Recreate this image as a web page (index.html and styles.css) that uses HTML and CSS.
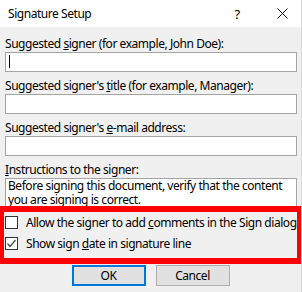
FILE: index.html
```html
<!DOCTYPE html>
<html>
<head>
  <meta charset="utf-8">
  <title>Signature Setup</title>
  <link rel="stylesheet" href="styles.css">
</head>
<body>
  <div class="dialog">
    <div class="titlebar">
      <span class="title">Signature Setup</span>
      <span class="help">?</span>
      <span class="close">
        <svg width="11" height="11" viewBox="0 0 11 11">
          <path d="M0.5 0.5 L10.5 10.5 M10.5 0.5 L0.5 10.5" stroke="#000" stroke-width="1" fill="none"/>
        </svg>
      </span>
    </div>

    <div class="content">
      <div class="field">
        <label>Suggested <u>s</u>igner (for example, John Doe):</label>
        <div class="textbox"><span class="caret"></span></div>
      </div>
      <div class="field">
        <label>Suggested signer's <u>t</u>itle (for example, Manager):</label>
        <div class="textbox"></div>
      </div>
      <div class="field">
        <label>Suggested signer's <u>e</u>-mail address:</label>
        <div class="textbox"></div>
      </div>
      <div class="field last">
        <label><u>I</u>nstructions to the signer:</label>
        <div class="textarea">Before signing this document, verify that the content you are signing is correct.</div>
      </div>

      <div class="highlight">
        <div class="check-row">
          <span class="checkbox"></span>
          <span>Allow the signer to add <u>c</u>omments in the Sign dialog</span>
        </div>
        <div class="check-row">
          <span class="checkbox">
            <svg width="11" height="11" viewBox="0 0 11 11">
              <path d="M1.5 5.5 L4 8.5 L9.5 2" stroke="#444" stroke-width="1.2" fill="none"/>
            </svg>
          </span>
          <span>Show sign <u>d</u>ate in signature line</span>
        </div>
      </div>

      <div class="buttons">
        <button class="btn default">OK</button>
        <button class="btn">Cancel</button>
      </div>
    </div>
  </div>
</body>
</html>
```

FILE: styles.css
```css
* {
  margin: 0;
  padding: 0;
  box-sizing: border-box;
}

body {
  font-family: 'Noto Sans', 'Open Sans', sans-serif;
  font-size: 12px;
  letter-spacing: -0.45px;
  color: #000;
  background: #f0f0f0;
  width: 302px;
  height: 292px;
  overflow: hidden;
}

.dialog {
  height: 292px;
  border-right: 1px solid #dadada;
}

.titlebar {
  height: 27px;
  background: #fff;
  display: flex;
  align-items: center;
  padding-left: 8px;
}

.title {
  flex: 1;
  font-size: 12px;
}

.help {
  width: 20px;
  text-align: center;
  font-size: 13px;
  margin-right: 20px;
}

.close {
  width: 30px;
  display: flex;
  justify-content: center;
  margin-right: 4px;
}

.content {
  padding: 9px 4px 0 5px;
}

.field {
  margin-bottom: 6px;
}

.field.last {
  margin-bottom: 0;
}

.field label {
  display: block;
  height: 15px;
  line-height: 15px;
  margin-bottom: 1px;
  white-space: nowrap;
}

.textbox {
  height: 20px;
  background: #fff;
  border: 1px solid #a3a3a3;
  padding: 2px 2px;
}

.caret {
  display: block;
  width: 1px;
  height: 13px;
  margin-left: 1px;
  background: #000;
}

.textarea {
  height: 31px;
  background: #fff;
  border: 1px solid #a3a3a3;
  border-bottom: none;
  padding: 0 2px;
  line-height: 14px;
  overflow: hidden;
}

/* red frame drawn over the option rows (and the textarea's lower edge) */
.highlight {
  position: relative;
  margin: -3px -4px 0 -5px;
  border: solid #ff0000;
  border-width: 6px 4px 6px 4px;
  padding: 0 0 4px 1px;
}

.check-row {
  height: 21px;
  display: flex;
  align-items: center;
  white-space: nowrap;
}

.checkbox {
  flex-shrink: 0;
  width: 13px;
  height: 13px;
  border: 1px solid #333;
  background: #fff;
  margin-right: 8px;
  display: flex;
  align-items: center;
  justify-content: center;
}

.buttons {
  display: flex;
  justify-content: center;
  gap: 10px;
  margin-top: 1px;
  padding-right: 1px;
}

.btn {
  width: 74px;
  height: 21px;
  font-family: inherit;
  font-size: 12px;
  letter-spacing: inherit;
  background: #e1e1e1;
  border: 1px solid #adadad;
  color: #000;
}

.btn.default {
  border: 2px solid #0078d7;
}
```
